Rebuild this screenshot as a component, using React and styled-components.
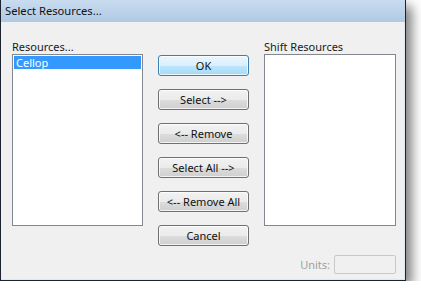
import React from "react";
import styled, { createGlobalStyle } from "styled-components";

const Global = createGlobalStyle`
  html, body { margin: 0; padding: 0; background: #ffffff; }
  body { font-family: "Noto Sans", "Open Sans", sans-serif; font-size: 11px; }
`;

const Window = styled.div`
  width: 406px;
  height: 281px;
  box-sizing: border-box;
  background: #f0f0f0;
  border: 1px solid #1b2230;
  border-top: none;
  box-shadow: 6px 6px 11px rgba(0, 0, 0, 0.5);
  display: flex;
  flex-direction: column;
`;

const TitleBar = styled.div`
  height: 22px;
  flex: none;
  background: linear-gradient(#c9dcf0, #b1c9e5);
  color: #111;
  font-size: 11.2px;
  line-height: 22px;
  padding-left: 4px;
`;

const Body = styled.div`
  flex: 1;
  display: grid;
  grid-template-columns: 131px 91px 132px;
  grid-template-rows: 15px 172px 1fr;
  column-gap: 15px;
  padding: 17px 0 0 11px;
  border-right: 1px solid #dfe7f1;
  border-bottom: 1px solid #dfe7f1;
`;

const Label = styled.div`
  grid-row: 1;
  grid-column: ${(p) => p.$col};
  font-size: 11px;
  line-height: 15px;
  color: #1a1a1a;
  white-space: nowrap;
`;

const ListBox = styled.div`
  box-sizing: border-box;
  background: #fff;
  border: 1px solid #828790;
  padding: 1px;
  grid-row: 2;
  grid-column: ${(p) => p.$col};
`;

const ListItem = styled.div`
  height: 13px;
  line-height: 13px;
  padding-left: 2px;
  font-size: 11px;
  background: ${(p) => (p.$selected ? "#3399ff" : "transparent")};
  color: ${(p) => (p.$selected ? "#fff" : "#000")};
`;

const ButtonColumn = styled.div`
  grid-row: 1 / span 3;
  grid-column: 2;
  display: flex;
  flex-direction: column;
  gap: 13px;
  padding-top: 16px;
`;

const Button = styled.button`
  box-sizing: border-box;
  width: 91px;
  height: 21px;
  padding: 0;
  margin: 0;
  font-family: inherit;
  font-size: 11px;
  color: #111;
  border-radius: 3px;
  border: 1px solid ${(p) => (p.$default ? "#3c7fb1" : "#707070")};
  background: ${(p) =>
    p.$default
      ? "linear-gradient(#eaf6fd 0%, #d9f0fc 50%, #bee6fd 51%, #a7d9f5 100%)"
      : "linear-gradient(#f2f2f2 0%, #ebebeb 50%, #dddddd 51%, #cfcfcf 100%)"};
  box-shadow: inset 0 0 0 1px rgba(255, 255, 255, 0.75);
  line-height: 19px;
`;

const UnitsRow = styled.div`
  grid-row: 3;
  grid-column: 3;
  display: flex;
  justify-content: flex-end;
  align-items: center;
  gap: 4px;
  padding-top: 29px;
  align-self: start;
`;

const UnitsLabel = styled.span`
  color: #a0a0a0;
  font-size: 11px;
`;

const UnitsBox = styled.div`
  box-sizing: border-box;
  width: 62px;
  height: 19px;
  border: 1px solid #c9c9c9;
  border-radius: 2px;
  background: #f0f0f0;
`;

export default function App() {
  return (
    <>
      <Global />
      <Window>
        <TitleBar>Select Resources...</TitleBar>
        <Body>
          <Label $col={1}>Resources...</Label>
          <Label $col={3}>Shift Resources</Label>
          <ListBox $col={1}>
            <ListItem $selected>Cellop</ListItem>
          </ListBox>
          <ButtonColumn>
            <Button $default>OK</Button>
            <Button>Select --&gt;</Button>
            <Button>&lt;-- Remove</Button>
            <Button>Select All --&gt;</Button>
            <Button>&lt;-- Remove All</Button>
            <Button>Cancel</Button>
          </ButtonColumn>
          <ListBox $col={3} />
          <UnitsRow>
            <UnitsLabel>Units:</UnitsLabel>
            <UnitsBox />
          </UnitsRow>
        </Body>
      </Window>
    </>
  );
}
